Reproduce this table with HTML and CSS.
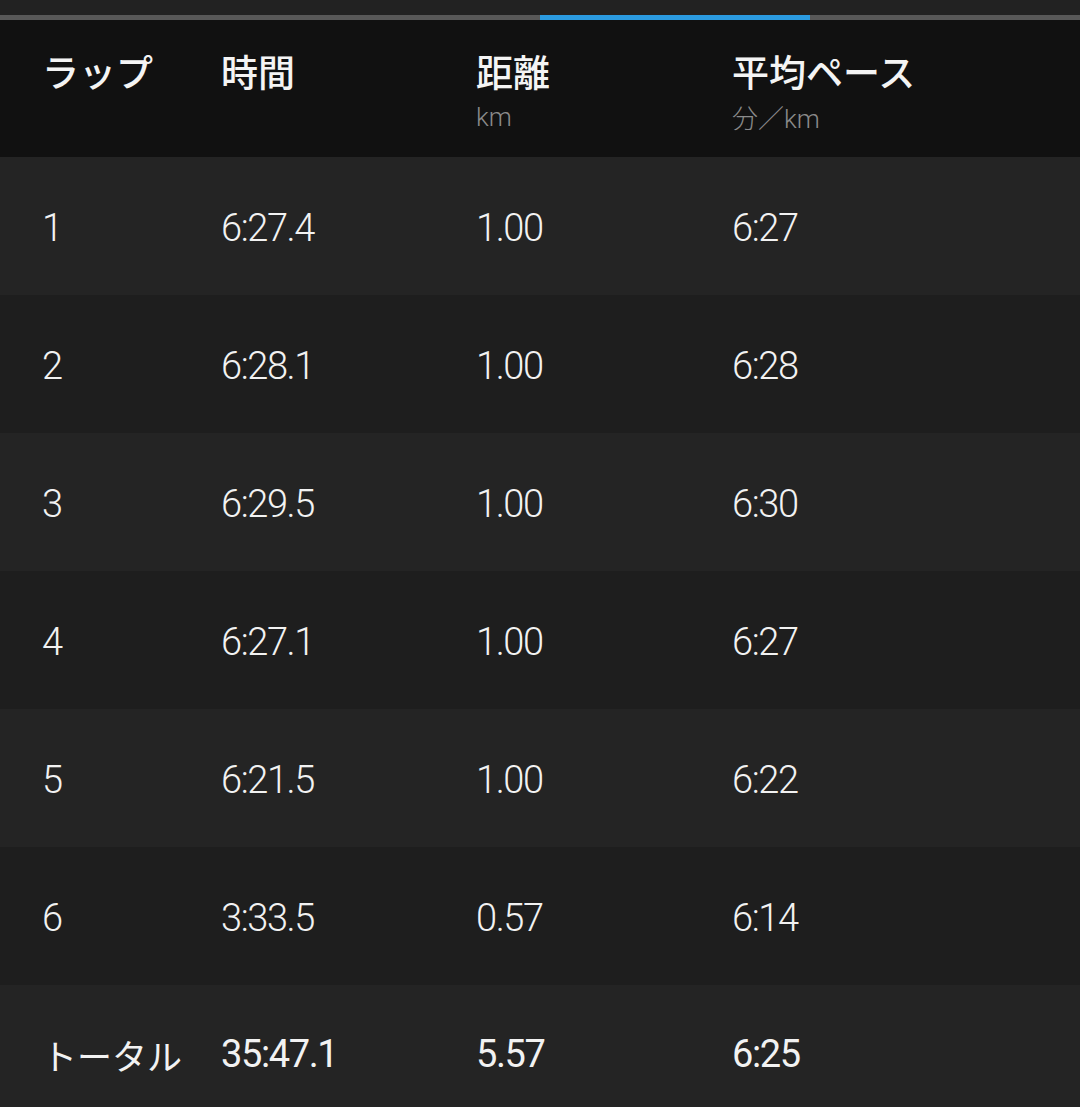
FILE: index.html
```html
<!DOCTYPE html>
<html lang="ja">
<head>
<meta charset="utf-8">
<link rel="stylesheet" href="styles.css">
</head>
<body>
<div class="tabs">
  <div class="tabbar"><div class="tab"></div><div class="tab"></div><div class="tab active"></div><div class="tab"></div></div>
</div>
<div class="table">
  <div class="row head">
    <div class="cell"><div class="h">ラップ</div></div>
    <div class="cell"><div class="h">時間</div></div>
    <div class="cell"><div class="h">距離</div><div class="unit">km</div></div>
    <div class="cell"><div class="h">平均ペース</div><div class="unit"><span class="jpu">分／</span>km</div></div>
  </div>
  <div class="row odd"><div class="cell">1</div><div class="cell">6:27.4</div><div class="cell">1.00</div><div class="cell">6:27</div></div>
  <div class="row even"><div class="cell">2</div><div class="cell">6:28.1</div><div class="cell">1.00</div><div class="cell">6:28</div></div>
  <div class="row odd"><div class="cell">3</div><div class="cell">6:29.5</div><div class="cell">1.00</div><div class="cell">6:30</div></div>
  <div class="row even"><div class="cell">4</div><div class="cell">6:27.1</div><div class="cell">1.00</div><div class="cell">6:27</div></div>
  <div class="row odd"><div class="cell">5</div><div class="cell">6:21.5</div><div class="cell">1.00</div><div class="cell">6:22</div></div>
  <div class="row even"><div class="cell">6</div><div class="cell">3:33.5</div><div class="cell">0.57</div><div class="cell">6:14</div></div>
  <div class="row odd total"><div class="cell jp">トータル</div><div class="cell">35:47.1</div><div class="cell">5.57</div><div class="cell">6:25</div></div>
</div>
</body>
</html>
```
FILE: styles.css
```css
html, body {
  margin: 0;
  padding: 0;
  background: #111111;
  overflow: hidden;
}
body {
  width: 1080px;
  height: 1107px;
  font-family: Roboto, "Noto Sans CJK JP", sans-serif;
  color: #f2f2f2;
}
.tabs {
  height: 20px;
  background: #222222;
  display: flex;
  flex-direction: column;
  justify-content: flex-end;
}
.tabbar {
  height: 5px;
  background: #585858;
  display: flex;
}
.tab {
  width: 270px;
}
.tab.active {
  background: #2b9be0;
}
.row {
  display: grid;
  grid-template-columns: 179px 255px 256px 1fr;
  padding-left: 42px;
  align-items: center;
  height: 138px;
  font-size: 38px;
  font-weight: 300;
  letter-spacing: -1.4px;
}
.row .cell {
  padding-top: 4px;
}
.row.head {
  height: 137px;
  background: #111111;
  align-items: start;
}
.row.head .cell {
  padding-top: 25px;
}
.h {
  font-family: "Noto Sans CJK JP", sans-serif;
  font-size: 37px;
  font-weight: 500;
  line-height: 52px;
  color: #f4f4f4;
  letter-spacing: 0;
}
.unit {
  font-family: Roboto, sans-serif;
  font-size: 26px;
  font-weight: 300;
  color: #8a8a8a;
  line-height: 34px;
  margin-top: 3px;
  letter-spacing: 0;
}
.jpu {
  font-family: "Noto Sans CJK JP", sans-serif;
  font-weight: 300;
}
.odd {
  background: #242424;
}
.even {
  background: #1e1e1e;
}
.total {
  height: 122px;
  font-weight: 400;
  letter-spacing: -1.4px;
}
.row.total .cell {
  padding-top: 16px;
}
.jp {
  font-family: "Noto Sans CJK JP", sans-serif;
  font-size: 35px;
  font-weight: 400;
  letter-spacing: 0;
}
```
